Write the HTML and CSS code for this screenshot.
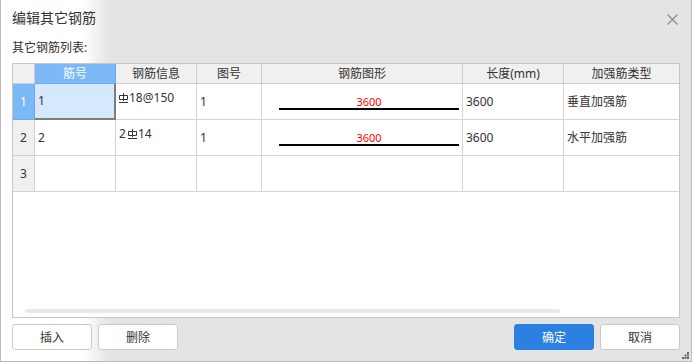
FILE: index.html
```html
<!DOCTYPE html>
<html lang="zh-CN">
<head>
    <meta charset="UTF-8">
    <title>编辑其它钢筋</title>
    <link rel="stylesheet" href="styles.css">
</head>
<body>
    <div class="dialog">
        <div class="titlebar">
            <span class="title">编辑其它钢筋</span>
            <svg class="close" width="11" height="11" viewBox="0 0 11 11">
                <path d="M0.5 0.5 L10.5 10.5 M10.5 0.5 L0.5 10.5" stroke="#8a8a8a" stroke-width="1.2" fill="none"/>
            </svg>
        </div>
        <div class="caption">其它钢筋列表:</div>

        <div class="grid">
            <div class="row head">
                <div class="cell"></div>
                <div class="cell active">筋号</div>
                <div class="cell">钢筋信息</div>
                <div class="cell">图号</div>
                <div class="cell">钢筋图形</div>
                <div class="cell">长度(mm)</div>
                <div class="cell last">加强筋类型</div>
            </div>
            <div class="row">
                <div class="cell num active">1</div>
                <div class="cell current">1</div>
                <div class="cell info"><svg class="sym" width="9" height="10" viewBox="0 0 9 10"><path d="M4.5 0 V8 M0.5 2.5 H8.5 V6.5 H0.5 Z M0 9.5 H9" stroke="#333" stroke-width="1" fill="none"/></svg>18@150</div>
                <div class="cell">1</div>
                <div class="cell shape"><div class="bar">3600</div></div>
                <div class="cell">3600</div>
                <div class="cell last">垂直加强筋</div>
            </div>
            <div class="row">
                <div class="cell num">2</div>
                <div class="cell">2</div>
                <div class="cell info">2<svg class="sym mid" width="9" height="10" viewBox="0 0 9 10"><path d="M4.5 0 V8 M0.5 2.5 H8.5 V6.5 H0.5 Z M0 9.5 H9" stroke="#333" stroke-width="1" fill="none"/></svg>14</div>
                <div class="cell">1</div>
                <div class="cell shape"><div class="bar">3600</div></div>
                <div class="cell">3600</div>
                <div class="cell last">水平加强筋</div>
            </div>
            <div class="row">
                <div class="cell num">3</div>
                <div class="cell"></div>
                <div class="cell"></div>
                <div class="cell"></div>
                <div class="cell"></div>
                <div class="cell"></div>
                <div class="cell last"></div>
            </div>
            <div class="scrollbar"></div>
        </div>

        <div class="footer">
            <div class="group">
                <button>插入</button>
                <button>删除</button>
            </div>
            <div class="group">
                <button class="primary">确定</button>
                <button>取消</button>
            </div>
        </div>

        <svg class="grip" width="7" height="7" viewBox="0 0 7 7">
            <rect x="5" y="0" width="2" height="2" fill="#666"/>
            <rect x="2.5" y="2.5" width="2" height="2" fill="#666"/>
            <rect x="5" y="2.5" width="2" height="2" fill="#666"/>
            <rect x="0" y="5" width="2" height="2" fill="#666"/>
            <rect x="2.5" y="5" width="2" height="2" fill="#666"/>
            <rect x="5" y="5" width="2" height="2" fill="#666"/>
        </svg>
    </div>
</body>
</html>
```

FILE: styles.css
```css
body {
    margin: 0;
    font-family: "Noto Sans", "Noto Sans CJK SC", sans-serif;
    font-size: 12px;
    color: #333;
}

.dialog {
    position: relative;
    box-sizing: border-box;
    width: 692px;
    height: 362px;
    border: 1px solid #bcbcbc;
    border-top: none;
    background: linear-gradient(to right, #fff 0, #fff 82px, #e4e4e4 108px);
    display: flex;
    flex-direction: column;
}

.titlebar {
    height: 38px;
    padding: 0 12px 0 11px;
    display: flex;
    align-items: center;
    justify-content: space-between;
}

.title {
    font-size: 14px;
    line-height: 18px;
    padding-bottom: 2px;
}

.close {
    margin-top: 1px;
    margin-right: 1px;
}

.caption {
    padding: 2px 11px 0;
    line-height: 16px;
    margin-bottom: 7px;
}

.grid {
    position: relative;
    box-sizing: border-box;
    margin-left: 11px;
    width: 668px;
    height: 255px;
    border: 1px solid #c6c6c6;
    background: #fff;
}

.row {
    display: grid;
    grid-template-columns: 22px 81px 81px 65px 201px 101px 1fr;
    height: 36px;
}

.row.head {
    height: 20px;
}

.cell {
    box-sizing: border-box;
    border-right: 1px solid #d3d3d3;
    border-bottom: 1px solid #d3d3d3;
    padding-left: 3px;
    display: flex;
    align-items: center;
    line-height: 16px;
    white-space: nowrap;
}

.cell.last {
    border-right: none;
}

.head .cell {
    background: #f0f0f0;
    justify-content: center;
    padding-left: 0;
    border-color: #cdcdcd;
}

.cell.num {
    background: #f0f0f0;
    justify-content: center;
    padding-left: 0;
}

.head .cell.active,
.cell.num.active {
    background: #7db8f6;
    color: #fff;
    border-color: #69aaf0;
}

.cell.current {
    background: #d5e8fd;
    border-right: 2px solid #7c7c7c;
    border-bottom: 2px solid #7c7c7c;
}

.cell.info {
    padding-bottom: 7px;
}

.sym {
    margin: 0 1px 1px 0;
}

.sym.mid {
    margin-left: 2px;
}

.cell.shape {
    display: block;
    padding-left: 0;
}

.bar {
    width: 180px;
    margin: 11px 0 0 17px;
    font-size: 11px;
    line-height: 13px;
    color: #ff0000;
    text-align: center;
    border-bottom: 2px solid #000;
}

.scrollbar {
    position: absolute;
    left: 12px;
    top: 245px;
    width: 535px;
    height: 4px;
    border-radius: 2px;
    background: #e9e9e9;
}

.footer {
    margin-top: 6px;
    padding: 0 11px;
    display: flex;
    justify-content: space-between;
}

.group {
    display: flex;
    gap: 6px;
}

button {
    width: 80px;
    height: 26px;
    font-family: inherit;
    font-size: 12px;
    color: #333;
    background: #fff;
    border: 1px solid #cbcbcb;
    border-radius: 3px;
    padding: 0;
}

button.primary {
    background: #2c80e2;
    border-color: #2c80e2;
    color: #fff;
}

.grip {
    position: absolute;
    right: 2px;
    bottom: 2px;
}
```
